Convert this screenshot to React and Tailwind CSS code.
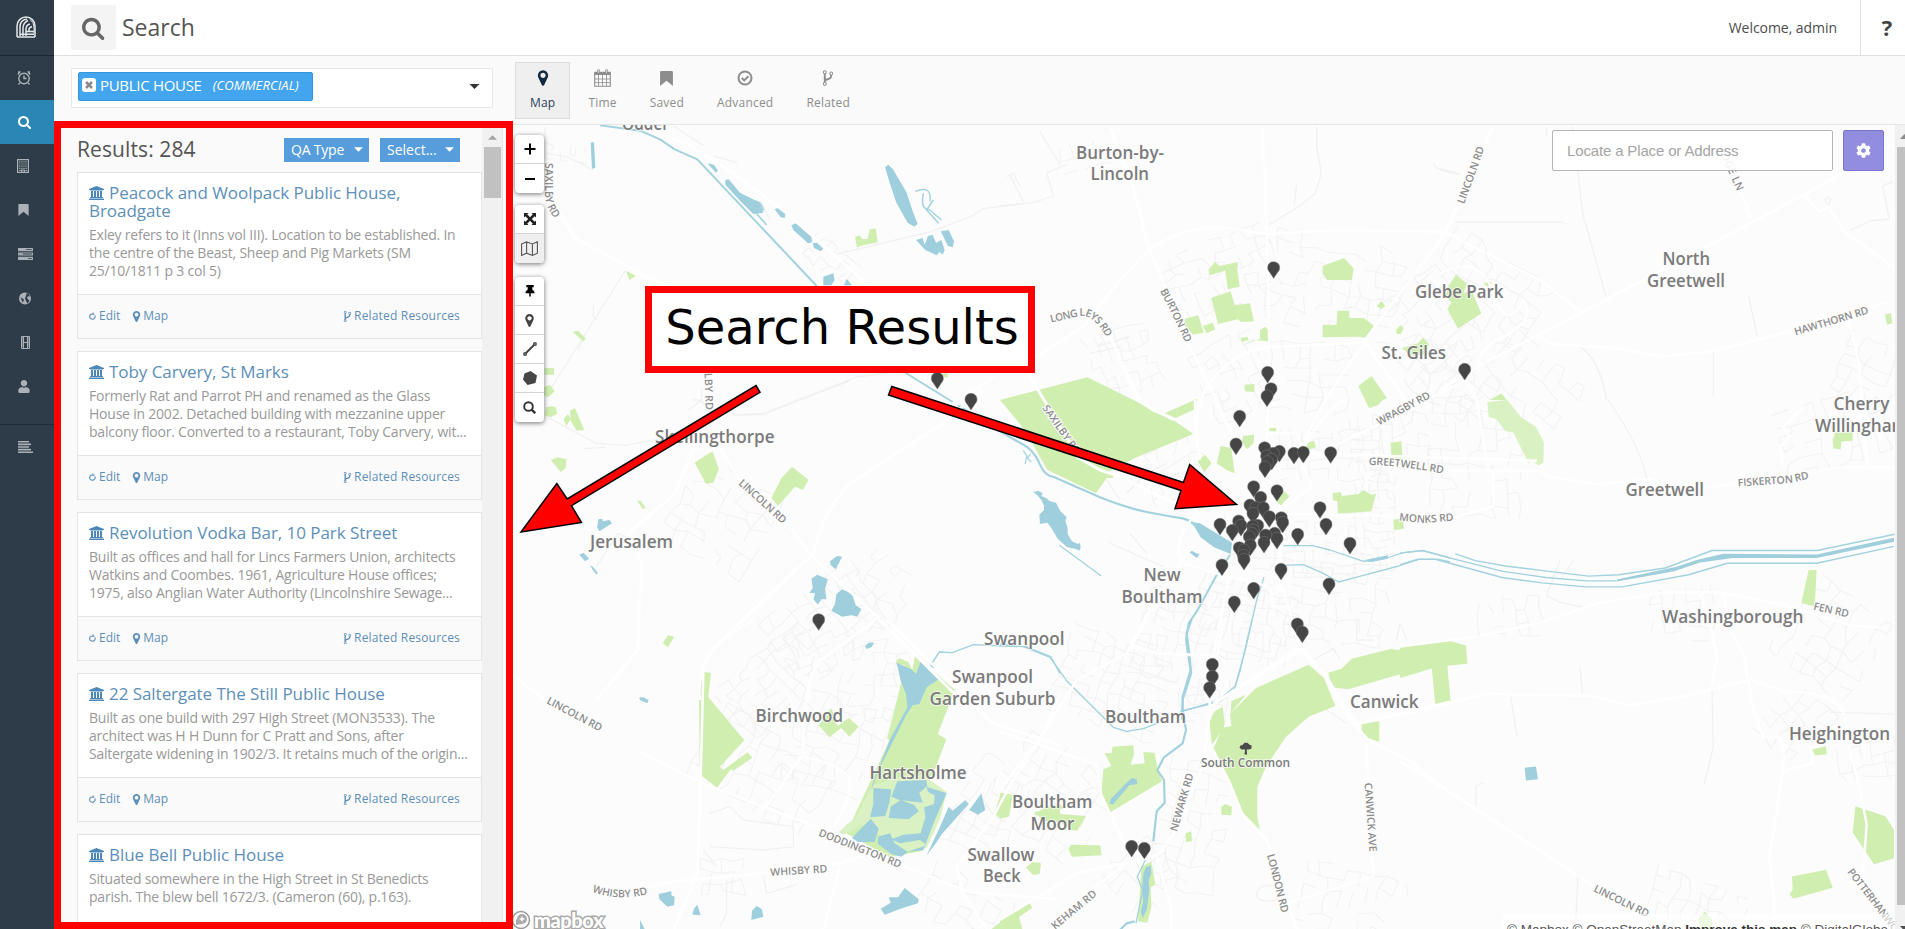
import React from "react";
import { FaCog, FaThumbtack, FaUser } from "react-icons/fa";

/* ---------- icons ---------- */
const SEARCH_D =
  "M1152 832q0-185-131.5-316.5t-316.5-131.5-316.5 131.5-131.5 316.5 131.5 316.5 316.5 131.5 316.5-131.5 131.5-316.5zm512 832q0 52-38 90t-90 38q-54 0-90-38l-343-342q-179 124-399 124-143 0-273.5-55.5t-225-150-150-225-55.5-273.5 55.5-273.5 150-225 225-150 273.5-55.5 273.5 55.5 225 150 150 225 55.5 273.5q0 220-124 399l343 343q37 37 37 90z";
const MARKER_D =
  "M1152 640q0-106-75-181t-181-75-181 75-75 181 75 181 181 75 181-75 75-181zm256 0q0 109-33 179l-364 774q-16 33-47.5 52t-67.5 19-67.5-19-46.5-52l-365-774q-33-70-33-179 0-212 150-362t362-150 362 150 150 362z";
const FORK_D =
  "M672 1472q0-40-28-68t-68-28-68 28-28 68 28 68 68 28 68-28 28-68zm0-1152q0-40-28-68t-68-28-68 28-28 68 28 68 68 28 68-28 28-68zm640 128q0-40-28-68t-68-28-68 28-28 68 28 68 68 28 68-28 28-68zm96 0q0 52-26 96.5t-70 69.5q-2 287-226 414-67 38-203 81-128 40-169.5 71t-41.5 100v26q44 25 70 69.5t26 96.5q0 80-56 136t-136 56-136-56-56-136q0-52 26-96.5t70-69.5v-820q-44-25-70-69.5t-26-96.5q0-80 56-136t136-56 136 56 56 136q0 52-26 96.5t-70 69.5v497q54-26 154-57 55-17 87.5-29.5t70.5-31 59-39.5 40.5-51 28-69.5 8.5-91.5q-44-25-70-69.5t-26-96.5q0-80 56-136t136-56 136 56 56 136z";
const BANK_D =
  "M960 0l960 384v128h-128q0 26-20.5 45t-48.5 19h-1526q-28 0-48.5-19t-20.5-45h-128v-128zm-704 640h256v768h128v-768h256v768h128v-768h256v768h128v-768h256v768h59q28 0 48.5 19t20.5 45v64h-1664v-64q0-26 20.5-45t48.5-19h59v-768zm1595 960q28 0 48.5 19t20.5 45v128h-1920v-128q0-26 20.5-45t48.5-19h1782z";

const Glyph = ({ d, className, box = "0 0 1792 1792" }) => (
  <svg viewBox={box} fill="currentColor" className={className}>
    <path d={d} />
  </svg>
);
const Bookmark = ({ className }) => (
  <svg viewBox="0 0 12 14" fill="currentColor" className={className}>
    <path d="M1 0h10q1 0 1 1v13l-6-5-6 5V1q0-1 1-1z" />
  </svg>
);
const Logo = () => (
  <svg viewBox="0 0 20 22" className="mr-0.5 h-[22px] w-5" fill="none" stroke="#e4e7e9" strokeWidth="1.500">
    <path d="M1 21V10a9 9 0 0 1 18 0v11M1 21h18M4 20V11q0-7 7-8M7 20v-8q0-5 5-7.500M10 20v-7q0-4 4-5M4 18.200h14M10 15.500h8M13 15v-1.500q0-2 3-3" />
    <path d="M14 3.500q4 2.500 4 8v6" strokeWidth="1" />
  </svg>
);
const Clock = () => (
  <svg viewBox="0 0 14 14" className="mr-0.5 h-[14px] w-[14px]" fill="none" stroke="currentColor" strokeWidth="1.400">
    <circle cx="7" cy="7.500" r="5.200" />
    <path d="M7 4.500v3h2.600M.8 3.500L3 .9M13.200 3.500L11 .9M2.800 12L1.500 13.500M11.200 12l1.300 1.500M1 1h2.500M10.500 1H13" />
  </svg>
);
const Building = () => (
  <svg viewBox="0 0 12 14" className="mr-1 h-[14px] w-3" fill="none" stroke="currentColor" strokeWidth="1.200">
    <path d="M.6.6h10.800v12.800H.6z" />
    <path d="M2.200 2.800h7.600M2.200 5h7.600M2.200 7.200h7.600M2.200 9.400h7.600" strokeDasharray="1.200 0.900" />
    <path d="M2.200 11.500h1.600M8.300 11.500h1.600M4.700 13v-2h2.600v2" />
  </svg>
);
const Server = () => (
  <svg viewBox="0 0 15 12" className="h-3 w-[15px]" fill="none" stroke="currentColor" strokeWidth="1.100">
    <path d="M.6.6h13.800v2H.6zM.6 5h13.800v2H.6zM.6 9.400h13.800v2H.6z" />
    <path d="M1 1.600h7M1 6h4M1 10.400h9" strokeWidth="1.400" />
  </svg>
);
const Globe = () => (
  <svg viewBox="0 0 12 13" className="h-[13px] w-3">
    <circle cx="6" cy="6.500" r="6" fill="currentColor" />
    <path d="M7.500 1.200l2.500 1 1 2.300-1.500-.5-1.500 1.500L9 7.500l1.500 1L8.500 11.500 7 9 6 6.500 7 4zM1.500 5l2 1.500 1.500 1L4 10.500 3 9z" fill="#2d3c48" />
  </svg>
);
const Film = () => (
  <svg viewBox="0 0 9 13" className="h-[13px] w-[9px]" fill="none" stroke="currentColor" strokeWidth="1">
    <path d="M.5.5h8v12h-8zM2.500.5v12M6.500.5v12M2.500 6.500h4" />
    <path d="M1.500 1.500v10M7.500 1.500v10" strokeDasharray="1 1" />
  </svg>
);
const AlignLeft = () => (
  <svg viewBox="0 0 15 12" className="h-3 w-[15px]" fill="currentColor">
    <path d="M0 0h11v1.600H0zM0 2.600h13v1.600H0zM0 5.200h11v1.600H0zM0 7.800h13v1.600H0zM0 10.400h15V12H0z" />
  </svg>
);
const Calendar = () => (
  <svg viewBox="0 0 17 18" className="h-[18px] w-[17px]" fill="none" stroke="currentColor" strokeWidth="1.100">
    <path d="M.7 3.200h15.600v14H.7z" />
    <path d="M.7 4.500h15.600" strokeWidth="3" />
    <path d="M4.500 6v11M8.500 6v11M12.500 6v11M1 10h15M1 13.600h15" strokeWidth=".8" />
    <path d="M4.500.5v4M12.500.5v4" strokeWidth="2.400" />
    <path d="M4.500 1.300v2.500M12.500 1.300v2.500" stroke="#fafafa" strokeWidth=".7" />
  </svg>
);
const CheckCircle = () => (
  <svg viewBox="0 0 16 16" className="h-4 w-4" fill="none" stroke="currentColor" strokeWidth="2">
    <circle cx="8" cy="8" r="6.500" />
    <path d="M4.800 8l2.400 2.400 4.200-4.200" />
  </svg>
);
const Refresh = () => (
  <svg viewBox="0 0 7 8" className="mr-[3px] h-2 w-[7px]" fill="none" stroke="#5d8fb9" strokeWidth="1.100">
    <path d="M1.400 3A2.700 2.500 0 1 0 5.800 3.500M.8 2.300H5.500M4 .6v1.700" />
  </svg>
);
const Caret = ({ className }) => (
  <svg viewBox="0 0 10 5" className={className} fill="currentColor">
    <path d="M0 0h10L5 5z" />
  </svg>
);

/* ---------- map sheets: each has its own origin and scale ---------- */
const SHEETS = {
  nw: "translate(500 0) scale(.33333)",
  n: "translate(1000 100) scale(.33333)",
  ne: "translate(1440 0) scale(.33333)",
  w: "translate(500 380) scale(.35714 .33333)",
  m: "translate(960 360) scale(.33333)",
  c: "translate(1130 400) scale(.33333)",
  e: "translate(1400 400) scale(.33333 .33738)",
  sw: "translate(640 620) scale(.33333)",
  s: "translate(1000 620) scale(.33333)",
};

const GREEN = [
  ["nw", "M1065 712l12-6 12 12 14-2 6-28 18-3 6 42-50 10-12 6zM378 812l30 16-20 12zM218 996l16-4 24 24-8 8zM134 1104h28v20h-28zM134 1160l16-6 14 20-20 18-18-10zM138 1222l20-4 14 20-18 14-20-6zM1325 1122l18-4v16l-12-4z"],
  ["n", "M625 510l20-24 14 12 54-12 1 16-40 10-44 14zM675 508l36-8 8 60-36 8zM634 594l58-20 12 42 46-6 12 54-40 2-8-8-60 14zM555 656l40-10 16 52-32 6-26-30zM608 678l30-10 8 20-26 12zM724 738l56-22v-26l16-10 10 12v32l-44-4-36 18zM722 714l20-4 4 10-20 6zM968 498l64-24 28 30-4 36h-74l-14-18zM968 674h42l2-42h36v22h44l30 24-24 36-22-4-108 2zM1130 618l14-14 12 14-12 10zM1188 690l14-14 10 8-10 18h-12zM1205 745l50-16 14-16 18 20-10 30-40 4zM1075 858l40-30 46 66-54 30zM733 854l30-2v24l-28-2zM728 1012l34-6-2 24-22 16-12-20zM920 1030l22-8 6 20-26 8zM809 984h20v10h-20z"],
  ["m", "M120 120L226 92 382 52 540 130 580 156 640 180 700 222 530 292 470 322 440 340 462 346 458 354 440 354 408 400 262 330 206 230 180 192zM614 160L712 116 704 148 648 174z"],
  ["c", "M203 184l22-20 20 26-22 26zM260 190l12-52 32 6 10 76-24-10zM338 108l34-4-2 24-18 20zM706 0h50l-10 14-26 10zM782 128l32-4 4 56-34-8zM608 280l24-4 4 12 50-6 14-12 24 14 14-2-4 16-10 36-100 8-2-38-14-4zM452 264l26 24-24 28-12-8zM790 360l28-6 4 32-30 4z"],
  ["ne", "M24 860l24-36 32 26-10 30 24-10 30 70-70 46-32-60 12-16-16-24zM132 852l14-10 10 8-14 10zM1335 944l18-6 4 32-16 4zM150 1200l34-20 16 20z"],
  ["e", "M1226 504h24l-6 108-40-10zM1298 118l8-22 52-2v26l-34 4-2 22-22-2zM0 734l150-20 48 14 4 54-60 6 10 106-44 8-12-106-96 28zM1236 1036l42-10 2 24-34 4zM1366 1204l90 30 26 40v84l-60 18-64-94zM1176 1412l102-20 20 54-118 32-12-14 10-12zM894 1540l20-24 22 24 2 28h-36z"],
  ["w", "M545 248l50-34 18 54-16 40-20 4zM760 354l28-60 30-34 46 40-16 30-22-10-48 58zM142 240l20-8 24 6-2 26-14 12-22-28zM196 92l14-8 26 66-22 2-16-30zM178 118l12-16 8 14-12 22zM384 362l10 0 14 22-8 4zM456 790l14-24 18 4-18 32zM130 86l26-6 4 22-26 6z"],
  ["sw", "M187 155l26 4-8 72 108 130-74 80 12 8 72-52 14 16-58 40-6-6-42 56-44-34-8-36-2-226zM536 316l38-52 18 54 34-24 30 26-28 30-24-26-36 28zM765 130l12-16 28 12 12 24 8-44 120 104-52 132 26 16-30 80 -30 60 60 24-70 170-100 20-130-72 130-280-8-4 36-140 18-80zM1062 580l22-62 34 6-10 64-26 8zM1182 576l78-10v40l-50-4zM1160 744l14-6 4-10 24 4-4 30-20 2zM1055 927l50-40 60-36 12 10-40 30 10 36z"],
  ["s", "M338 380l62-4 2 26-10 32 42-4-4-34 34 2 8 46 14 40-160 96-22-60 6-72 24-10-20-40 20 2zM636 374l-8-70 16-30 24-14 6 50-4 16zM694 244l44-20-46 56zM640 386l28-62 26-6-4-36 78-78 158-70 46 40 34 84-80 32-68 60-60 90-26 60v90l8 40-56-58-42-100zM985 158l40-12 30-30 120-30 14 4 160-26v60l-154 40-150 44-50-6zM1296 150l42-6 12 100-44 8zM1084 312l54-8v62l-40-14-12-20zM664 560l12-8 20 8-2 26-30-2zM556 640l18-6 2 30-18 2zM205 686l8-12 88 2 4 30-90 4zM102 584l34-22 44-10 12 12-40 16 106 8-26 44-20-2-40-30zM78 742l20-16 24 2-2 32-16 4zM0 520l30 8-4 62-26 4zM424 740l30-16 12 70-14 8 2 60-12 46-28-4zM0 900l90-50 6 14-60 40 30 23H0z"],
];
const PALE = [
  ["e", "M262 6l60-6 40 50 46 30 24 46-2 60-14 8-20-14-10 8-46-92-24-4-28-36-22-6z"],
  ["sw", "M596 636l54-48 48-94 70-20 80-10 72 52-20 80-40 88-60 10-130-80-60 30z"],
];
const WATER = [
  ["nw", "M272 428l10-2 4 78-10 2zM1155 502l10-8 14 14 40 68 20 60 14 36-10 8-20-12-34-60-20-60zM1248 720l20-6 6 20 10-26 14-4 10 24 16-8 10 30-6 14-10-8-8 10-34-16zM1322 694l24-4 16 34-4 18-14-4zM622 490l20 4 12 18-6 6zM676 540l10-2 34 40 60 30 10 30-30 4-40-40-44-48zM824 628l10-4 22 18-2 12-12-2zM874 676l14-6 46 40 2 16-12 4-44-40zM938 730l12-2 20 18-8 8-20-10zM970 830l30-10 4 20-10 16h-24zM1040 836l16 20h-24z"],
  ["w", "M276 418l10-2 2 8 18-4 8 10-36 24-6-12zM222 524l12-6 16 18-12 8zM252 556l8 4 14 18-4 6-10-14zM924 544l20-16 14 2-18 38-14-12zM872 596l16-12 30 14-8 28 4 32-14 0-10 16-12-16 4-18-16-2 10-14zM942 642l16-14 28 14 10 34 16 12-12 22-16-4-26 4-30-18 10-20zM1022 800l10-12 14 0-8 12-12 6zM388 954l14-2 12 8h-20z"],
  ["m", "M220 396l14-4 14 8-4 8 14 6 12 10 18 4 12 24 20 20-4 10 6 20 2 22 12 20 18 8 6-4 2 16-4 8-12-6-24-4-28-24-20-34-12-16-22 4-2-28 14-14 0-14-8-16-12-14z"],
  ["c", "M180 366l30 4 96 58-4 34-50-20-40-30-20-34zM178 456l8-4 12 8 10 2-6 12-10-6zM704 480l70-14v10l-50 10-20-2z"],
  ["sw", "M770 128l44 20 14 14 14-38 54 54-36 24-22 50-20 4 -20 30-80 160-24 66 4-20 50-130 54-100-4-40-16-40zM700 504l54 4-6 40-12 40-46 4 10-40zM772 484l86-4 4 18-24 20 10 30-70-8-24-10zM860 500l60 20-38 86-32 84-50 6 60-20-20-16-60 10-26-12 36-14 52-4 14-48 -4-30 30-10 2-26-20-10zM752 560l30-20 40 14 14 20-30 24-60-4zM636 654l56-58 24 30-12 40-50 0zM714 650l36-10 14 30 40 26-20 14-30-8-40-30zM860 706l40-86 26-60 12 12 38-32 10 12-80 90-20 30zM988 570l36-50 12 50-22 14zM722 866l30-18-6-16 28 0 20-28 42 34-2 12-46 14-54 20zM334 900l2-28 14-14 16 10 4 22zM158 880l4-14 10-12 10 32-24-2zM56 822l38-8 0 12 10 4-2 26-20 4-24-22zM0 232l26 8-4 10-22-10zM676 78l12-10 14 0-6 12-14 6zM0 900l14 27H0z"],
  ["s", "M328 552l4-14 44-46 20-18 14 4 2 14-24 4-50 58-10-4zM430 760l8-18 14-6 2 24-8 20 2 30-8 60-12 24-6-20 8-30-4-30z"],
  ["e", "M374 1090l34-4 6 38-36 4zM650 532l180-38 60-20 80-18 280 2 232-50v12l-232 48h-250l-100 14-80 26-170 30z"],
];
const LATE_GREEN = [["nw", ""], ["w", ""]];
const STREAMS = [
  [2, "nw", "M300 376L420 392 480 418 524 448 592 478 950 858"],
  [1.5, "nw", "M740 610q40-20 50 20l-40-10M760 630l40 45M1246 574q50-20 44 30M1270 580q-10 50 20 50M1300 600l-20 30 36 40M1290 630l34 30"],
  [1.8, "nw", "M1216 1118L1362 1208M1374 1216L1420 1244"],
  [2.2, "m", "M0 140L120 214 200 260Q226 280 240 314T280 350L420 412Q500 444 560 456T650 472Q690 476 710 500"],
  [1.2, "m", "M298 556L424 648M190 272l10 14-4 26M212 282l-10 12 12 12"],
  [1.3, "c", "M460 437H548L600 450 700 484 770 474 820 458 878 452 960 474M450 496l70-2 60 26 46 26 60-16 120-32 60-20h60l34 8M402 532l-20 60-36 156-30 110-48 42-110 34"],
  [2, "c", "M300 465l-40 60-60 110-24 34-8 50 10 70 6 30-26 80-2 60"],
  [2.2, "s", "M574 0l-14 40 10 80 2 30-24 80v40M548 270l10 60-10 40-56 42-20 38 20 30 2 68-24 26-10 90M404 904l-24 6-20 20"],
  [1.3, "s", "M540 274l90-22 30-8 40-30 20-60 36-154M0 72l70 8 80 32 50 70 100 100 40 40 40 12 50-8 46-18M436 720l-24 50 16 40-20 100"],
  [1.4, "w", "M1568 880l-26-50-70-30-66-2-80-4-60 24-36-2-24 40 8 8"],
  [1.4, "e", "M0 454l68-8 90 24 150 38 130 18 120 10h90M0 488l54-16h52l200 54 120 16 130 12h110l200-36 116-34h268l232-50M166 456l60 20 90 16 130 16 120 14 90-4 140-20 140-52h316l232-48"],
];
const MAJOR = [
  [2.5, "nw", "M420 385L560 430 700 520 860 640 1110 860M134 560L220 710 420 820 500 860"],
  [2, "nw", "M1310 1240L1500 1120 1600 1060"],
  [3, "m", "M204 40L240 100 330 250 350 290 420 330 480 350 600 410 720 460"],
  [2.5, "m", "M480 0L530 120 640 180"],
  [2.5, "n", "M330 80L400 260 445 440 500 570 570 740 630 860 700 1010M788 80L800 400 808 730 800 1080M110 770L250 680 360 540 445 450Q560 370 690 385L800 402 1020 390 1330 395 1380 410M600 1080Q570 960 620 860 700 750 810 742L1090 726 1340 395 1380 310M1095 726l120 170M1095 730Q960 900 900 1060M330 710L420 900M1000 1040L1380 850"],
  [2.5, "ne", "M0 720L40 640 160 380M0 690L300 840 425 938 130 1090 0 1170M425 938L1100 580 1360 430M1090 580l50 56 26-14 46 72 150 110M900 570l34 86M290 1000l40 32 200 12 130 26 160-16 230-60 300-90M1220 960q40 80 44 240M0 820q120-60 160 60t90 20q40 60-60 110t-70 110M80 1140l30 60"],
  [2.5, "w", "M1350 30L1240 130 980 310Q900 400 878 520L600 800Q550 880 560 960M610 190l60 110 120 110 80 115 60 60 110 110L1290 960M640 170L540 210 490 340 360 460 396 545 386 810 270 960M1060 712L900 840Q850 900 870 960M36 885l90 75"],
  [2.5, "c", "M250 0l70 130M195 0l0 90M415 0l-4 100h90l20 60 700 22M520 150Q560 60 640 0M520 200l25 60-80 60M400 340l560 10M190 350Q120 440 160 490M0 740l90-160 90-130M160 490l100 30 200 50 50 170 80 90 60 100 30 40M510 740L240 920M0 740l80 20 170 6 50-250M240 900v60M450 440v120h-30l10 60h60"],
  [2.5, "e", "M230 0l35 210M0 210l420 0 30 18 140 22 170-16M900 262l340-46 60-16h182M160 350l120-36v-100M0 730l240-30 180-40 180-60 200-30h160l200 40 200 60 100 4M900 570l30 100 22 90-18 90M970 570l20 110 40 70 30 170 30 80 50 0 14 60-30 200-16 90 14 140-6 160M0 935l260-64 310 6 120 28 160-26 200-50 100 34 60 4q120 10 130 90l0 40 40 160 20 100-12 160M0 1070l240 150 340 220 270 130M1150 1100l90-24-14-60M1380 40l26 160M1150 200l-10-60 30-30-20-30 60-60"],
  [2.5, "sw", "M340 0Q180 90 190 160l-8 320-10 280-70 167M0 395l180 92 340 130 60 20 210 100 200 80 260 20M700 10L540 120Q490 180 490 400L380 560M490 410q150 30 140 90t-50 120M0 815q60-30 150-35l320-30 130-20 90-30M600 740l-50 187M740 0l320 310 120 40 80 24M1260 640M1260 220Q1190 400 1130 460L1060 590l-110 150 20 80 70 107"],
  [2.5, "s", "M440 0L380 100 230 180 130 340 0 510M0 335l120 40 170 60 14 90 70 150M390 70l90 32 170 6M670 0l-40 240-10 130-20 90-80 180-40 60L420 720 230 760 0 900M630 370l60 120 40 100 70 70 90 267M905 90L640 250M905 90l80 90 60 110 60 70 120 60 125 100M1060 315l290-70M1100 370l20 400-260 80M470 710l44 160v57M380 730L180 880"],
];
const MINOR = [
  ["nw", "M140 460l60 10 80 40M135 380v80l-10 40M376 812l-240 380M640 468l72 20M520 378l90 58M1010 762l280-66 130-50 30-20 110-14M700 1245l90-4 280-110 160-20M280 910v40l10 10M235 1050l14-30M780 600l30 60M565 1230l40-30v-30M1520 530l20-10 20 40"],
  ["n", "M0 318l100-10 60-20-20-70 60-24M120 95l60 100M30 225l40 80M950 80v60l14 80-18 60-50 40-90 55M890 255l-8 60M1300 190l10 14 70 18M270 760l90-20M290 740l100-30"],
  ["ne", "M0 510l60 14M44 666l320 0 18 6M398 380l30 260 70 250M926 890l26 120M1360 545l-32 12 20 100-60 6-60 30M320 380v30M820 1050v140M420 1040q60 40 80 160M1154 600l10-10 8 10-6 16z"],
  ["w", "M130 110l140 80 80 6 100-20M236 206l60-4M540 60h20l30 30 90 16 60-4 240-100M270 560l60-100 40 20"],
  ["e", "M624 0q100 140 118 240M540 796l8 74M332 880l20 118M936 860l4 170-28 110M534 1415l-8 150M480 475l-40 105 40 20 70 14M520 475l-40 60M228 1204v-60l20-8M1290 925l192 6M876 714h50"],
  ["sw", "M210 580l60-20 40 40 150 20v60l-90 10-160-10M190 690l40 50M260 780v100l-20 40M370 770l10 50 90-26"],
  ["s", "M770 830q0-40 50-34M770 830q10 20 60 10M980 270l60 40M940 120l60-34 20 30M1070 0v60h50M1190 60l10-50 20 50"],
  ["m", "M450 550l160 70M510 520l50 60M340 300l50 40h50M500 400l60-60 60-30M440 360l40 60"],
];

/* residential street webs: x, y, width, height, angle, cell size */
const WEBS = [
  [1165, 242, 100, 60, -20, 11], [1270, 240, 130, 90, 12, 13], [1090, 330, 60, 60, -18, 11],
  [1200, 340, 60, 70, -25, 11], [1270, 345, 70, 60, 3, 13], [1390, 290, 90, 60, 55, 11],
  [1400, 345, 90, 60, 35, 12], [1430, 250, 110, 70, 32, 13], [1490, 350, 80, 50, 40, 13],
  [1350, 415, 70, 45, -5, 11], [1430, 400, 90, 110, 2, 13], [1280, 430, 100, 45, 0, 10],
  [1150, 440, 60, 60, 65, 11], [1330, 500, 90, 40, 90, 8], [1140, 590, 60, 90, 15, 10],
  [1195, 580, 90, 80, 12, 8], [1225, 520, 130, 45, 5, 10], [1290, 570, 90, 70, 10, 12],
  [1060, 640, 110, 80, 20, 11], [1180, 680, 45, 40, 5, 8], [1000, 750, 100, 90, 35, 13],
  [1160, 760, 60, 130, 12, 13], [680, 470, 80, 80, 30, 13], [720, 650, 110, 60, -42, 10],
  [770, 590, 100, 70, -35, 11], [700, 730, 120, 70, 30, 13], [790, 700, 90, 90, 15, 13],
  [850, 560, 60, 60, 40, 12], [840, 640, 60, 70, 5, 11], [960, 760, 60, 90, 28, 12],
  [1790, 590, 80, 80, 35, 13], [1650, 590, 60, 35, -5, 13], [1780, 400, 100, 65, -15, 13],
  [1840, 340, 50, 60, 25, 12], [1770, 690, 50, 60, 45, 13], [1840, 745, 50, 25, -10, 11],
  [1650, 880, 90, 40, 20, 12], [1300, 870, 100, 58, 15, 13], [920, 880, 90, 48, 30, 13],
  [700, 860, 40, 30, 0, 11], [1480, 600, 50, 30, -5, 12], [545, 145, 40, 15, 5, 8],
  [805, 245, 50, 25, 35, 9], [1110, 850, 60, 50, -38, 12], [1060, 145, 40, 20, -15, 12],
];
function web([x, y, w, h, a, c], seed) {
  let s = seed * 7919 + 17;
  const rnd = () => ((s = (s * 16807) % 2147483647) / 2147483647);
  const rad = (a * Math.PI) / 180;
  const cx = x + w / 2;
  const cy = y + h / 2;
  const nx = Math.ceil(w / c);
  const ny = Math.ceil(h / c);
  const pts = [];
  for (let j = 0; j <= ny; j++)
    for (let i = 0; i <= nx; i++) {
      const dx = -w / 2 + i * c + (rnd() - 0.5) * c * 0.55;
      const dy = -h / 2 + j * c + (rnd() - 0.5) * c * 0.55;
      pts.push([(cx + dx * Math.cos(rad) - dy * Math.sin(rad)).toFixed(1), (cy + dx * Math.sin(rad) + dy * Math.cos(rad)).toFixed(1)]);
    }
  let d = "";
  for (let j = 0; j <= ny; j++)
    for (let i = 0; i <= nx; i++) {
      const p = pts[j * (nx + 1) + i];
      if (i < nx && rnd() < 0.55) d += `M${p}L${pts[j * (nx + 1) + i + 1]}`;
      if (j < ny && rnd() < 0.6) d += `M${p}L${pts[(j + 1) * (nx + 1) + i]}`;
    }
  return d;
}

/* place labels: text, left, baseline, width */
const PLACES = [
  ["Odder", 622, 130, 47], ["Burton-by-", 1076, 158.5, 88], ["Lincoln", 1090.5, 180, 58.5], ["Glebe Park", 1415, 297.5, 88.5],
  ["St. Giles", 1381.5, 358.5, 64.5], ["North", 1662.5, 265, 47.5], ["Greetwell", 1647, 286.5, 78], ["Cherry", 1833.5, 410, 56],
  ["Willingham", 1815, 432, 93], ["Greetwell", 1625.5, 495.5, 78.5], ["Washingborough", 1662, 622.5, 141.5],
  ["Heighington", 1789, 739.5, 101], ["Canwick", 1350, 708, 68.5], ["New", 1143.5, 581, 37], ["Boultham", 1121.5, 602.5, 81],
  ["Swanpool", 984, 644.5, 80.5], ["Swanpool", 952, 683, 81], ["Garden Suburb", 929.5, 704.5, 126], ["Birchwood", 755.5, 722, 87.5],
  ["Hartsholme", 869.5, 779, 97], ["Boultham", 1012, 808, 80.5], ["Moor", 1030.5, 829.5, 44], ["Boultham", 1105, 723, 81],
  ["Swallow", 967.5, 860.5, 67], ["Beck", 983, 882, 37.5], ["Skellingthorpe", 655, 442.5, 119.5], ["Jerusalem", 590, 547.5, 83],
];
/* road labels: text, path, width */
const ROADS = [
  ["SAXILBY RD", "M545 163L545 196Q546 210 560 225", 58], ["LONG LEYS RD", "M1051 322.500L1080 316Q1095 313 1111 346", 66],
  ["BURTON RD", "M1160 291L1168 306 1190 352", 58], ["LINCOLN RD", "M1464 204.500L1486 144", 60], ["DGE LN", "M1721 155L1741 200", 40],
  ["HAWTHORN RD", "M1795.500 335.500L1874 312", 77], ["WRAGBY RD", "M1379 425.500L1436 395", 59], ["SAXILBY RD", "M1042 408L1082 465", 58],
  ["GREETWELL RD", "M1369 465Q1400 465 1450 475", 75], ["MONKS RD", "M1399 520.500L1425 523 1462 520", 55],
  ["FISKERTON RD", "M1738 486.500L1790 483 1820 476", 72], ["FEN RD", "M1813 609.500L1860 620", 36], ["LINCOLN RD", "M1593 891L1660 924", 60],
  ["POTTERHANWORTH RD", "M1847 872L1935 985", 112], ["CANWICK AVE", "M1364.500 783L1370 860", 69], ["LONDON RD", "M1267 855L1284 922", 60],
  ["NEWARK RD", "M1177 832L1196 766", 60], ["KEHAM RD", "M1055 930L1102 891", 55], ["DODDINGTON RD", "M818 835.500L906 870.500", 88],
  ["WHISBY RD", "M770.500 876L832 872", 57], ["WHISBY RD", "M592 891.500Q620 903 655 892", 57], ["LINCOLN RD", "M546 703L610 737", 61],
  ["LINCOLN RD", "M738 484L790 531", 60], ["LBY RD", "M704.500 373L706 415", 37],
];
/* heads of the result pins, per sheet */
const PINS = [
  ["n", [[821, 503], [803, 817], [813, 866], [801, 888], [719, 949]]],
  ["c", [[318, 132], [404, 143], [448, 154], [430, 160], [410, 168], [425, 178], [412, 185], [405, 201], [492, 160], [520, 157], [602, 158], [371, 260], [441, 272], [392, 292], [360, 315], [378, 322], [400, 323], [369, 340], [570, 323], [588, 373], [418, 350], [454, 353], [458, 367], [270, 373], [326, 363], [333, 376], [307, 391], [383, 376], [368, 378], [370, 390], [366, 400], [358, 410], [503, 403], [434, 400], [407, 405], [441, 415], [402, 427], [361, 435], [328, 443], [342, 450], [340, 466], [342, 478], [660, 430], [276, 495], [453, 508], [371, 565], [597, 552], [313, 606], [502, 672], [517, 696], [247, 793], [247, 829], [239, 863]]],
  ["ne", [[74, 1108]]],
  ["nw", [[1312, 1135], [1413, 1198]]],
  ["s", [[395, 679], [433, 685]]],
  ["sw", [[536, -1]]],
];

const Areas = ({ list, fill }) => list.map(([t, d], i) => (
  <g key={i} transform={SHEETS[t]}><path d={d} fill={fill} /></g>
));
const Lines = ({ list, stroke }) => list.map(([w, t, d], i) => (
  <g key={i} transform={SHEETS[t]}>
    <path d={d} fill="none" stroke={stroke} strokeWidth={w} vectorEffect="non-scaling-stroke" strokeLinejoin="round" />
  </g>
));

const MapCanvas = () => (
  <svg viewBox="504 125 1391 804" className="block h-[804px] w-[1391px] bg-[#fcfcfc]" fontFamily="'Open Sans', 'Noto Sans', sans-serif">
    {WEBS.map((w, i) => <path key={i} d={web(w, i + 1)} stroke="#f3f3f3" strokeWidth="1.200" fill="none" />)}
    <Lines list={MINOR.map(([t, d]) => [1.3, t, d])} stroke="#f1f1f1" />
    <Areas list={GREEN} fill="#d0eeb0" />
    <Areas list={PALE} fill="#daf2c3" />
    <Areas list={WATER} fill="#9fcfdd" />
    <Lines list={STREAMS} stroke="#a3d2df" />
    <Lines list={MAJOR} stroke="#ffffff" />
    <g fill="#8d8d8d" stroke="#fcfcfc" strokeWidth="2" paintOrder="stroke" fontSize="10.500" fontWeight="600">
      {ROADS.map(([t, d, w], i) => (
        <g key={i}>
          <path id={`road${i}`} d={d} fill="none" stroke="none" />
          <text textLength={w}><textPath href={`#road${i}`} textLength={w}>{t}</textPath></text>
        </g>
      ))}
    </g>
    <g fill="#7b7b7b" stroke="#fcfcfc" strokeOpacity=".7" strokeWidth="2" paintOrder="stroke" fontWeight="600">
      {PLACES.map(([t, x, y, w], i) => (
        <text key={i} x={x} y={y} textLength={w} lengthAdjust="spacingAndGlyphs" fontSize="17.500">{t}</text>
      ))}
      <text x="1201" y="766.500" textLength="89" lengthAdjust="spacingAndGlyphs" fontSize="12.500">South Common</text>
    </g>
    <g transform="translate(1239.500 742.500)" fill="#4a4a4a">
      <path d="M5 12l.6-5H2L0 5l1-2 2-.5L5 .3h3l2 2 2 .7 0 3L9.500 7H7.200L7.600 12z" />
    </g>
    {PINS.map(([t, list]) => list.map(([x, y], i) => (
      <g key={t + i} transform={SHEETS[t]}>
        <path transform={`translate(${x} ${y})`} d="M0 32L-12 14C-18 8 -18 2 -18 -1A18 17 0 0 1 18 -1C18 2 18 8 12 14Z" fill="#454545" stroke="#777" strokeWidth="1.500" />
      </g>
    )))}
  </svg>
);

/* ---------- results ---------- */
const RESULTS = [
  { title: ["Peacock and Woolpack Public House,", "Broadgate"], lines: ["Exley refers to it (Inns vol III). Location to be established. In", "the centre of the Beast, Sheep and Pig Markets (SM", "25/10/1811 p 3 col 5)"] },
  { title: ["Toby Carvery, St Marks"], lines: ["Formerly Rat and Parrot PH and renamed as the Glass", "House in 2002. Detached building with mezzanine upper", "balcony floor. Converted to a restaurant, Toby Carvery, wit..."] },
  { title: ["Revolution Vodka Bar, 10 Park Street"], lines: ["Built as offices and hall for Lincs Farmers Union, architects", "Watkins and Coombes. 1961, Agriculture House offices;", "1975, also Anglian Water Authority (Lincolnshire Sewage..."] },
  { title: ["22 Saltergate The Still Public House"], lines: ["Built as one build with 297 High Street (MON3533). The", "architect was H H Dunn for C Pratt and Sons, after", "Saltergate widening in 1902/3. It retains much of the origin..."] },
  { title: ["Blue Bell Public House"], lines: ["Situated somewhere in the High Street in St Benedicts", "parish. The blew bell 1672/3. (Cameron (60), p.163)."], tall: true },
];
const Card = ({ r }) => (
  <article className="mb-3 shrink-0 border border-[#e4e4e4] bg-white">
    <div className={r.tall ? "px-[11px] pt-[11px] pb-8" : "px-[11px] pt-[11px] pb-[14px]"}>
      <h2 className="text-[17px] leading-[18px] tracking-[-0.05px] whitespace-nowrap text-[#5d8fb9]">
        <Glyph d={BANK_D} box="0 0 1920 1792" className="mr-[5px] inline h-[14px] w-[15px] align-[-1px] text-[#4d86b8]" />
        {r.title.map((t, i) => <React.Fragment key={i}>{i > 0 && <br />}{t}</React.Fragment>)}
      </h2>
      <p className="mt-[6px] text-[14px] leading-[18px] tracking-[-0.22px] whitespace-nowrap text-[#999]">
        {r.lines.map((t, i) => <span key={i} className="block">{t}</span>)}
      </p>
    </div>
    <footer className="flex h-[44px] items-center border-t border-[#e4e4e4] bg-[#fafafa] pr-[21px] pb-px pl-[11px] text-[12px] text-[#5d8fb9]">
      <Refresh />Edit
      <Glyph d={MARKER_D} className="ml-[10px] h-[13px] w-[13px]" /><span>Map</span>
      <span className="ml-auto flex items-center tracking-[0.18px]"><Glyph d={FORK_D} className="h-[13px] w-[13px]" />Related Resources</span>
    </footer>
  </article>
);

const NavItem = ({ children, active }) => (
  <div className={active ? "flex h-11 items-center justify-center bg-[#2a86b5] pr-1 text-white" : "flex h-11 items-center justify-center pr-1 text-[#abb1b6]"}>
    {children}
  </div>
);
const Tab = ({ icon, label, active }) => (
  <div className={active
    ? "flex h-[57px] flex-col items-center border border-[#ddd] bg-[#efefef] px-[14px] pt-[5px] text-[#2b425b]"
    : "flex h-[57px] flex-col items-center border border-transparent px-[14px] pt-[5px] text-[#8d8d8d]"}>
    <span className="flex h-5 items-center">{icon}</span>
    <span className="mt-[6px] text-[12px] leading-[18px] tracking-[0.2px]">{label}</span>
  </div>
);
const ToolGroup = ({ items }) => (
  <div className="flex w-[29px] flex-col divide-y divide-[#d5d5d5] overflow-hidden rounded-[4px] bg-white shadow-[0_1px_5px_rgba(0,0,0,0.55)]">
    {items.map((it, i) => <div key={i} className="flex h-[29px] items-center justify-center text-[#333]">{it}</div>)}
  </div>
);

export default function App() {
  return (
    <div className="relative flex h-[929px] w-[1905px] overflow-hidden bg-[#fafafa] font-['Open_Sans','Noto_Sans',sans-serif]">
      <nav className="w-[54px] shrink-0 bg-[#2d3c48]">
        <div className="flex h-[56px] items-center justify-center border-b border-[#1c262e] pb-px"><Logo /></div>
        <NavItem><Clock /></NavItem>
        <NavItem active><Glyph d={SEARCH_D} className="h-[14px] w-[14px]" /></NavItem>
        <NavItem><Building /></NavItem>
        <NavItem><Bookmark className="mr-1 h-3 w-[11px]" /></NavItem>
        <NavItem><Server /></NavItem>
        <NavItem><Globe /></NavItem>
        <NavItem><Film /></NavItem>
        <NavItem><FaUser className="mr-0.5 h-[13px] w-[12px]" /></NavItem>
        <div className="mt-4 border-t border-[#1f2b34]" />
        <NavItem><AlignLeft /></NavItem>
      </nav>

      <div className="flex min-w-0 flex-1 flex-col">
        <header className="flex h-[56px] shrink-0 items-center border-b border-[#e0e0e0] bg-white">
          <div className="ml-[17px] flex h-[45px] w-[45px] items-center justify-center rounded-[2px] bg-[#f4f4f4]">
            <Glyph d={SEARCH_D} className="h-6 w-6 text-[#666]" />
          </div>
          <h1 className="ml-[6px] text-[23px] text-[#555]">Search</h1>
          <span className="ml-auto text-[14px] tracking-[-0.05px] text-[#4d4d4d]">Welcome, admin</span>
          <div className="ml-[23px] flex h-full w-[45px] items-center justify-center border-l border-[#e0e0e0] pl-2 text-[22px] font-bold text-[#444]">?</div>
        </header>

        <div className="flex min-h-0 flex-1">
          <section className="flex w-[450px] shrink-0 flex-col">
            <div className="mt-3 ml-[17px] flex h-10 w-[422px] shrink-0 items-center border border-[#e4e9eb] bg-white pr-3 pb-1 pl-1.5">
              <div className="flex h-[29px] w-[235px] items-center rounded-[2px] border border-[#3795dd] bg-[#44a5ef] pb-[2px] pl-[3px] whitespace-nowrap text-white">
                <span className="mr-1 flex h-[14px] w-[14px] shrink-0 items-center justify-center rounded-[3px] bg-white">
                  <svg viewBox="0 0 8 8" className="h-2 w-2" stroke="#8a8a8a" strokeWidth="2.500"><path d="M1 1l6 6M7 1L1 7" /></svg>
                </span>
                <span className="text-[15px] tracking-[-0.3px]">PUBLIC HOUSE</span>
                <span className="ml-[11px] pt-px text-[13px] tracking-[0.1px] italic">(COMMERCIAL)</span>
              </div>
              <Caret className="ml-auto h-[5px] w-[11px] text-[#333]" />
            </div>

            <div className="mt-[18px] flex min-h-0 flex-1 overflow-hidden">
              <div className="flex w-[428px] flex-col pl-[23px]">
                <div className="flex h-[46px] shrink-0 items-center pt-px pr-[22px]">
                  <span className="text-[21px] tracking-[0.1px] text-[#555]">Results: 284</span>
                  <button className="ml-auto flex h-6 w-[85px] items-center justify-between bg-[#579ddb] pr-1.5 pl-[7px] text-[14px] tracking-[-0.2px] text-white">QA Type<Caret className="h-[5px] w-[9px]" /></button>
                  <button className="ml-[11px] flex h-6 w-[80px] items-center justify-between bg-[#579ddb] pr-1.5 pl-[7px] text-[14px] text-white">Select...<Caret className="h-[5px] w-[9px]" /></button>
                </div>
                {RESULTS.map((r) => <Card key={r.title[0]} r={r} />)}
              </div>
              <div className="flex w-[21px] flex-col items-center border-r border-[#e4e4e4] bg-[#f1f1f1] pt-[9px]">
                <Caret className="h-[5px] w-[9px] shrink-0 rotate-180 text-[#a3a3a3]" />
                <div className="mt-[7px] h-[51px] w-[17px] shrink-0 bg-[#c1c1c1]" />
              </div>
            </div>
          </section>

          <section className="flex min-w-0 flex-1 flex-col">
            <div className="flex h-[69px] shrink-0 gap-[3px] border-b border-[#e6e6e6] pt-1.5 pl-[11px]">
              <Tab active label="Map" icon={<Glyph d={MARKER_D} className="h-[18px] w-[18px] text-[#13293d]" />} />
              <Tab label="Time" icon={<Calendar />} />
              <Tab label="Saved" icon={<Bookmark className="h-[15px] w-[13px]" />} />
              <Tab label="Advanced" icon={<CheckCircle />} />
              <Tab label="Related" icon={<Glyph d={FORK_D} className="h-[18px] w-[18px]" />} />
            </div>
            <div className="flex min-h-0 flex-1">
              <div className="relative w-[1391px] shrink-0 overflow-hidden">
                <MapCanvas />
                <div className="absolute top-[10px] left-[11px] flex flex-col gap-3">
                  <ToolGroup items={[
                    <svg key="p" viewBox="0 0 12 12" className="h-3 w-3" stroke="#000" strokeWidth="2"><path d="M6 .5v11M.5 6h11" /></svg>,
                    <svg key="m" viewBox="0 0 12 12" className="h-3 w-3" stroke="#000" strokeWidth="2"><path d="M1 6h10" /></svg>,
                  ]} />
                  <ToolGroup items={[
                    <svg key="x" viewBox="0 0 12 12" className="h-3 w-3" fill="#222"><path d="M0 0h4.500L3.200 1.300 6 4.200 8.800 1.300 7.500 0H12v4.500l-1.300-1.300L7.800 6l2.900 2.800L12 7.500V12H7.500l1.300-1.300L6 7.800l-2.800 2.900L4.500 12H0V7.500l1.300 1.300L4.200 6 1.300 3.200 0 4.500z" /></svg>,
                    <span key="y" className="flex h-full w-full items-center justify-center bg-[#efefef]"><svg viewBox="0 0 17 15" className="h-[15px] w-[17px]" fill="none" stroke="#555" strokeWidth="1.100"><path d="M.6 3l5-2.200L11.400 3l5-2.200v11.400l-5 2.200-5.800-2.200-5 2.200zM5.600.8v11.400M11.400 3v11.400" /></svg></span>,
                  ]} />
                  <div className="pt-[2px]">
                    <ToolGroup items={[
                      <FaThumbtack key="a" className="h-3 w-[10px] text-black" />,
                      <Glyph key="b" d={MARKER_D} className="h-[15px] w-[15px] text-[#444]" />,
                      <svg key="c" viewBox="0 0 14 14" className="h-[14px] w-[14px]" stroke="#444" strokeWidth="1.500" fill="#888"><path d="M2 12L12 2" strokeWidth="2" /><path d="M.8 10.800h2.500v2.500H.8zM10.700.8h2.500v2.500h-2.500z" strokeWidth="1" /></svg>,
                      <svg key="d" viewBox="0 0 14 14" className="h-[14px] w-[14px]" fill="#464646"><path d="M7.500 0L14 4.500 12.500 12 4.500 14 0 8.500 1.500 2.500z" /></svg>,
                      <svg key="e" viewBox="0 0 13 13" className="h-[13px] w-[13px]" fill="none" stroke="#333" strokeWidth="1.900"><circle cx="5.500" cy="5.500" r="4.300" /><path d="M8.700 8.700l3.500 3.500" strokeWidth="2.400" /></svg>,
                    ]} />
                  </div>
                </div>
                <div className="absolute top-[5px] left-[1048px] flex gap-[10px]">
                  <div className="flex h-[41px] w-[281px] items-center rounded-[2px] border border-[#b5b5b5] bg-white/90 pt-px pl-[14px] font-['Liberation_Sans',Arial,sans-serif] text-[15px] tracking-[-0.15px] text-[#a5a5a5]">Locate a Place or Address</div>
                  <div className="flex h-[41px] w-[41px] items-center justify-center rounded-[2px] border border-[#7a74cc] bg-[#938de0]"><FaCog className="h-[15px] w-[15px] text-white" /></div>
                </div>
                <div className="absolute top-[785px] left-[7px] flex items-center gap-[3px]">
                  <svg viewBox="0 0 20 20" className="h-5 w-5"><circle cx="10" cy="10" r="8.500" fill="#fff" stroke="#999" strokeWidth="1.500" /><circle cx="11" cy="9" r="5" fill="#aaa" /><path d="M5 15l0-6 6 5z" fill="#aaa" /><path d="M11 6l1 2 2 1-2 1-1 2-1-2-2-1 2-1z" fill="#fff" /></svg>
                  <span className="font-['Lato',sans-serif] text-[20px] leading-5 font-black tracking-[-0.4px] text-white [-webkit-text-stroke:3px_#aaa] [paint-order:stroke_fill]">mapbox</span>
                </div>
                <div className="absolute top-[789px] left-[998px] h-[30px] w-[393px] bg-white/60 pt-[7px] pl-[5px] font-['Liberation_Sans',Arial,sans-serif] text-[13.5px] leading-[18px] whitespace-nowrap text-[#555]">
                  © Mapbox © OpenStreetMap <b className="text-[#333]">Improve this map</b> © DigitalGlobe
                </div>
              </div>
              <div className="flex flex-1 flex-col overflow-hidden bg-[#f1f1f1] pt-[9px] pl-[2px]">
                <svg viewBox="0 0 9 5" className="ml-[3px] h-[5px] w-[9px] shrink-0" fill="#8b8b8b"><path d="M0 5h9L4.500 0z" /></svg>
                <div className="mt-2 h-[758px] w-5 shrink-0 bg-[#c1c1c1]" />
                <svg viewBox="0 0 9 5" className="mt-[21px] ml-[3px] h-[5px] w-[9px] shrink-0" fill="#505050"><path d="M0 0h9L4.500 5z" /></svg>
              </div>
            </div>
          </section>
        </div>
      </div>

      {/* annotations lying over the page */}
      <div className="absolute top-[121px] left-[54px] h-[808px] w-[459px] border-[7px] border-[#f00]" />
      <div className="absolute top-[286px] left-[645px] flex h-[87px] w-[390px] items-center justify-center border-[7px] border-[#f00] bg-white pb-[6px] pl-1 font-['DejaVu_Sans',sans-serif] text-[48px] whitespace-nowrap text-black">Search Results</div>
      <svg viewBox="0 0 1905 929" className="absolute top-0 left-0 h-[929px] w-[1905px]" fill="#f00" stroke="#000" strokeWidth="1.500">
        <path d="M756 385.500L760 392.300 571.500 505.700 581.500 522.500 521 532 556.800 483.500 567.200 499z" />
        <path d="M891.800 386.500L888.500 395 1181 490.500 1175 508.700 1236.500 504.500 1189.700 464.500 1183.500 482.500z" />
      </svg>
    </div>
  );
}
